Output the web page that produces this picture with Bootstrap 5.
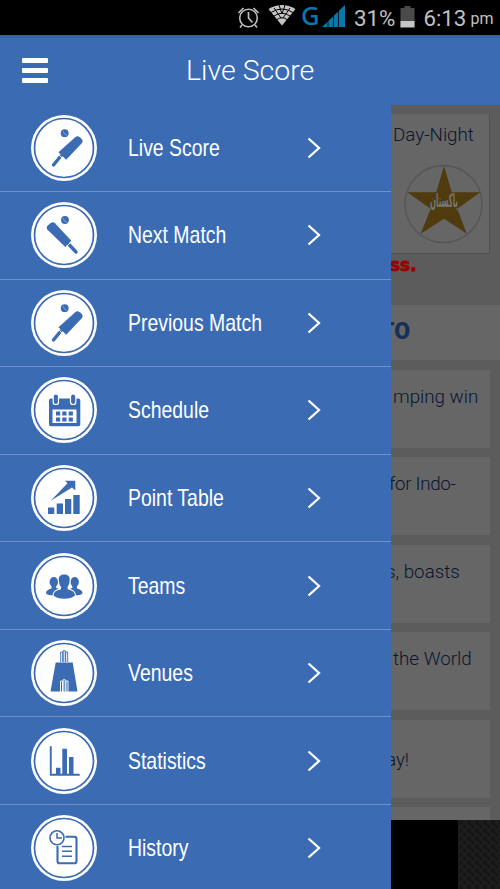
<!DOCTYPE html>
<html lang="en">
<head>
<meta charset="utf-8">
<meta name="viewport" content="width=device-width, initial-scale=1">
<title>Live Score</title>
<link href="https://cdn.jsdelivr.net/npm/bootstrap@5.3.0/dist/css/bootstrap.min.css" rel="stylesheet">
<style>
:root{--blue:#3a6bb3}
body{font-family:Roboto,"Noto Sans",sans-serif;background:#5c5c5c;height:889px;overflow:hidden}
.screen{width:500px;height:889px;overflow:hidden}
.status{height:35px;background:#000;color:#c1c1c1;font-size:22.3px;line-height:36px}
.status svg{display:block;flex:none}
.g-net{font:500 25.5px/37px "Noto Sans",sans-serif;color:#0878ab;width:18px;height:37px;margin-top:-4px}
.meridiem{font-size:16px;margin-left:4px;padding-top:3px}
.topbar{height:70px;background:var(--blue);box-shadow:inset 0 4px 3px -3px #2d5590}
.topbar h1{font-size:28.5px;font-weight:300;color:#fff;line-height:70px;padding:2px 0 0 138px}
.burger{margin-left:22px;width:26px;gap:5px}
.burger i{height:5px;border-radius:1px;background:#fff}
.drawer{width:391px;background:var(--blue);height:784px}
.entry{height:87.57px;border-bottom:1px solid #6c91cb;padding-left:31px;color:#fff}
.entry:first-child{height:87px}
.entry:last-child{border-color:transparent}
.entry svg{flex:none}
.entry b{font:400 24px/30px "Liberation Sans",sans-serif;margin-left:31px;width:179px;white-space:nowrap;transform:scaleX(.81);transform-origin:0 50%}
.ic{fill:var(--blue)}
.behind{width:109px;height:784px;background:#5c5c5c;color:#0a1530;overflow:hidden;font-size:18.8px;font-weight:300}
.feed{height:715px;overflow:hidden}
.feed>div{white-space:nowrap;flex:none}
.panel{background:#666;width:99px;height:78px;margin-bottom:9.5px;line-height:24px;padding:15px 0 0 2px;overflow:hidden}
.cut span{display:block;margin-left:-7px}
.tight span{margin-left:-4px;letter-spacing:-.3px}
.lower{padding-top:28px}
.match{height:140px;margin:9px 0 0;border-right:1px solid #505050;border-bottom:1px solid #505050;padding:9px 0 0}
.match span{padding-left:2px}
.result{height:51px;color:#900;font:700 17px/22px "DejaVu Sans",sans-serif;-webkit-text-stroke:.8px #900;margin-left:-1px}
.teamhead{height:55px;background:#666;color:#182f58;font:900 23px/54px Roboto,sans-serif;margin-bottom:9.5px}
.teamhead span{display:block;margin-left:-11px}
.advert{height:69px;background:#000}
.hexes{width:42px;background:radial-gradient(circle at 3px 3px,#151515 2px,transparent 2.5px) 0 0/8px 8px,radial-gradient(circle at 7px 7px,#151515 2px,transparent 2.5px) 0 0/8px 8px,#1d1d1d}
.crest{font:700 19px "DejaVu Sans",sans-serif}
</style>
<script src="https://cdn.jsdelivr.net/npm/bootstrap@5.3.0/dist/js/bootstrap.bundle.min.js"></script>
</head>
<body>
<svg width="0" height="0" class="position-absolute">
<defs>
<g id="ring"><circle cx="33" cy="33" r="33" fill="#fff" stroke="none"/><circle cx="33" cy="33" r="29.500" fill="none" stroke="#3a6bb3" stroke-width="1.700"/></g>
<g id="batright" fill="#3a6bb3"><circle cx="33.700" cy="18.200" r="3.900"/><path d="M32 16l1.500 3 3 1.500" fill="none" stroke="#9db6dc" stroke-width=".7"/><path d="M44.500 22Q46.500 20.300 48.800 22.200L50.800 24Q52.500 26 51 28L35.200 44.700L27.500 37.300Z"/><path d="M29.800 41L22.500 50" stroke="#3a6bb3" stroke-width="3.400" stroke-linecap="round"/><path d="M26.700 38.500L33.500 45.500" stroke="#fff" stroke-width="1"/></g>
<path id="chev" d="M1.500 1.500L12 11L1.500 20.500" fill="none" stroke="#fff" stroke-width="2.300"/>
</defs>
</svg>
<main class="screen">
<header class="status d-flex align-items-center">
<svg width="301" height="35" viewBox="0 0 301 35" fill="none" stroke="#bdbdbd"><circle cx="248.500" cy="18" r="8.800" stroke-width="1.600"/><path d="M248.500 12v6l4 4.500M242 25l-2 2.500M255 25l2 2.500M238.500 13l5-5M258.500 13l-5-5" stroke-width="1.700"/><path d="M268.500 9Q282 1 295.500 9L282 25.500Z" fill="#c5c5c5" stroke="none"/><path d="M271 12.500Q282 5.500 293 12.500M274 16Q282 10.500 290 16M277 19.500Q282 16 287 19.500M279 5l3 9 3-9M274 8l7 10M290 8l-7 10" stroke="#000" stroke-width="1"/></svg>
<span class="g-net">G</span>
<svg width="35" height="35" viewBox="-1 0 35 35" fill="#0878ab"><path d="M2 27L25 5V27Z"/><path d="M8 4v24M13.500 4v24M18.500 4v24" stroke="#000" stroke-width=".8"/></svg>
<span>31%</span>
<svg width="28" height="35" viewBox="0 0 28 35"><path d="M5.500 8h4V6h6v2h4v19h-14Z" fill="#4a4a4a"/><path d="M5.500 21h14v6.500h-14Z" fill="#c5c5c5"/></svg>
<span>6:13</span><span class="meridiem">pm</span>
</header>
<div class="topbar d-flex align-items-center">
<div class="burger d-flex flex-column"><i></i><i></i><i></i></div>
<h1 class="mb-0">Live Score</h1>
</div>
<div class="d-flex">
<nav class="drawer">
<div class="entry d-flex align-items-center"><svg width="66" height="66"><use href="#ring"/><use href="#batright"/></svg><b>Live Score</b><svg width="14" height="22"><use href="#chev"/></svg></div>
<div class="entry d-flex align-items-center"><svg width="66" height="66" class="ic"><use href="#ring"/><circle cx="34" cy="18" r="3.900"/><path d="M32 16l1.500 3 3 1.500" fill="none" stroke="#9db6dc" stroke-width=".7"/><path d="M16.300 27.500Q14.800 25 17 23.200L20 20.800Q22 19.300 24 21.300L40.300 38.800L34.300 45Z"/><path d="M38 42.500L45 50" stroke="#3a6bb3" stroke-width="3.400" stroke-linecap="round"/><path d="M34.300 45.700L41 39" stroke="#fff"/></svg><b>Next Match</b><svg width="14" height="22"><use href="#chev"/></svg></div>
<div class="entry d-flex align-items-center"><svg width="66" height="66"><use href="#ring"/><use href="#batright"/></svg><b>Previous Match</b><svg width="14" height="22"><use href="#chev"/></svg></div>
<div class="entry d-flex align-items-center"><svg width="66" height="66" class="ic"><use href="#ring"/><rect x="18" y="21.500" width="31.300" height="27.800" rx="2"/><path fill="#fff" d="M21.500 32.500h24v13.500h-24Z"/><rect x="22.200" y="17" width="5.300" height="10.500" rx="2.600" stroke="#fff" stroke-width="1.200"/><rect x="39.500" y="17" width="5.300" height="10.500" rx="2.600" stroke="#fff" stroke-width="1.200"/><path d="M25 34.500h4.200v4H25zM31.300 34.500h4.200v4h-4.200zM37.700 34.500h4.200v4h-4.200zM25 40.500h4.200v4H25zM31.300 40.500h4.200v4h-4.200zM37.700 40.500h4.200v4h-4.200z"/></svg><b>Schedule</b><svg width="14" height="22"><use href="#chev"/></svg></div>
<div class="entry d-flex align-items-center"><svg width="66" height="66" class="ic"><use href="#ring"/><path d="M17 42.400h6.300V49H17zM25.700 38.400H32V49h-6.300zM34 34h6.300v15H34zM42.300 30h6.400v19h-6.400zM19.700 35.700L36.500 18.300L34 15.700H44.300V25.500L41 22.500Z"/></svg><b>Point Table</b><svg width="14" height="22"><use href="#chev"/></svg></div>
<div class="entry d-flex align-items-center"><svg width="66" height="66" class="ic"><use href="#ring"/><g id="mate"><ellipse cx="22.800" cy="29" rx="4.200" ry="5"/><path d="M20.500 32h4.700v3l6 2v5.300H20Q15.500 42 15 40Q15 37 20.500 35.500Z"/></g><use href="#mate" transform="matrix(-1 0 0 1 66.500 0)"/><g stroke="#fff" stroke-width="1.800" paint-order="stroke"><path d="M30 33h6.500v3.200Q44 37.500 44 42.500Q40 45.700 33.200 45.700T22.500 42.500Q22.500 37.500 30 36.200Z"/><path d="M27.800 27Q27.300 21.500 33.200 21.500T38.700 27Q38.200 35 33.200 35T27.800 27Z"/></g><path d="M30 32h6.500v6H30z"/></svg><b>Teams</b><svg width="14" height="22"><use href="#chev"/></svg></div>
<div class="entry d-flex align-items-center"><svg width="66" height="66" class="ic"><use href="#ring"/><path d="M24.700 22.600h17L46.500 51.600H19.500Z"/><path d="M29.700 22V12h2v10M32.200 22V10.700h2V22M34.700 22V12h2v10" fill="none" stroke="#3a6bb3" stroke-width=".9"/><path d="M29.500 52V41h2v11M32.200 52V39.700h2V52M35 52V41h2v11" fill="none" stroke="#fff" stroke-width=".9"/></svg><b>Venues</b><svg width="14" height="22"><use href="#chev"/></svg></div>
<div class="entry d-flex align-items-center"><svg width="66" height="66" class="ic"><use href="#ring"/><path d="M18.800 18.300h1.900V45.800h28v1.900H18.800zM25 39.700h4.500V46H25zM31.300 20.700h4.700v25.500h-4.700zM38 29h4.500v17H38z"/></svg><b>Statistics</b><svg width="14" height="22"><use href="#chev"/></svg></div>
<div class="entry d-flex align-items-center"><svg width="66" height="66" fill="none" stroke="#3a6bb3" stroke-width="2.100"><use href="#ring"/><path d="M34.500 21.800H43.500Q45.500 21.800 45.500 24V46Q45.500 48.300 43.500 48.300H28.500Q26.500 48.300 26.500 46V31"/><circle cx="26" cy="22.800" r="7" stroke-width="1.600"/><path d="M26 18v5h5" stroke-width="1.500"/><path d="M31 31.500h10M31 36.300h10M31 41.200h10" stroke-width="1.400"/></svg><b>History</b><svg width="14" height="22"><use href="#chev"/></svg></div>
</nav>
<section class="behind">
<div class="feed d-flex flex-column">
<div class="panel match"><span>Day-Night</span>
<svg width="98" height="100" viewBox="391 147 98 100" class="d-block"><circle cx="443.500" cy="204" r="38.500" fill="none" stroke="#555" stroke-width="1.300"/><path d="M444 166L451.700 192.300H480.300L457.300 208.700L466.700 233.700L444 218.700L420.700 233.700L430.700 208.700L407.300 192.300H436.300Z" fill="#4f3b0d"/><text class="crest" x="444" y="207" text-anchor="middle" textLength="28" lengthAdjust="spacingAndGlyphs" fill="#777">پاکستان</text></svg></div>
<div class="result">ss.</div>
<div class="teamhead overflow-hidden"><span>TO</span></div>
<div class="panel">mping win</div>
<div class="panel cut tight"><span>for Indo-</span></div>
<div class="panel cut"><span>s, boasts</span></div>
<div class="panel">the World</div>
<div class="panel cut lower"><span>ay!</span></div>
<div class="panel"></div>
</div>
<div class="advert d-flex justify-content-end"><div class="hexes"></div></div>
</section>
</div>
</main>
</body>
</html>
